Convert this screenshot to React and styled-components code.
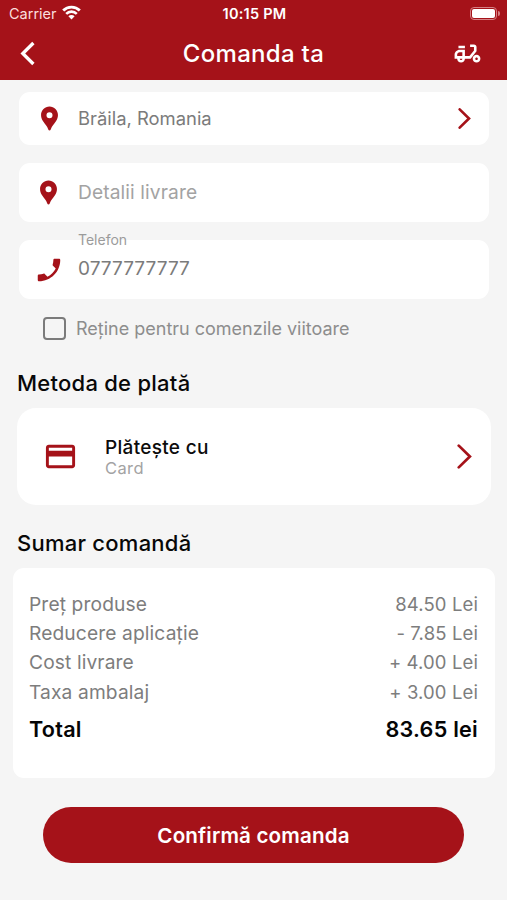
import React from 'react'
import styled, { createGlobalStyle } from 'styled-components';
import { MdLocationPin, MdPhone, MdPayment, MdOutlineDeliveryDining } from 'react-icons/md';

const summary = [
  { label: 'Preț produse', value: '84.50 Lei' },
  { label: 'Reducere aplicație', value: '- 7.85 Lei' },
  { label: 'Cost livrare', value: '+ 4.00 Lei' },
  { label: 'Taxa ambalaj', value: '+ 3.00 Lei' },
]

const Chevron = ({ width, height, stroke }) => (
  <svg width={width} height={height} viewBox="0 0 12 20" fill="none">
    <path d="M1.4 1.3 10.3 10 1.4 18.7" stroke="currentColor" strokeWidth={stroke} strokeLinecap="round" />
  </svg>
)

const WifiIcon = () => (
  <svg width="19" height="15" viewBox="0 0 19 15" fill="none" stroke="#fff">
    <path d="M1.2 5.5a11.8 11.8 0 0 1 16.6 0" strokeWidth="2.9" />
    <path d="M4.2 8.8a7.5 7.5 0 0 1 10.6 0" strokeWidth="2.6" />
    <path d="M9.5 14.4 6.4 11.3a4.4 4.4 0 0 1 6.2 0z" fill="#fff" stroke="none" />
  </svg>
)

const BackIcon = () => (
  <svg width="16" height="26" viewBox="0 0 16 26" fill="none">
    <path d="M13.4 2 2.8 12.5l10.6 10.5" stroke="#fff" strokeWidth="3.3" />
  </svg>
)

const App = () => {
  return (
    <>
      <GlobalStyle />
      <Screen>
        <Header>
          <StatusBar>
            <Carrier>
              <span>Carrier</span>
              <WifiIcon />
            </Carrier>
            <Clock>10:15 PM</Clock>
            <Battery>
              <BatteryBody />
              <BatteryTip />
            </Battery>
          </StatusBar>
          <NavBar>
            <NavButton aria-label="Înapoi">
              <BackIcon />
            </NavButton>
            <Title>Comanda ta</Title>
            <NavButton aria-label="Livrare" $end>
              <MdOutlineDeliveryDining size={31} color="#fff" />
            </NavButton>
          </NavBar>
        </Header>
        <Fields>
          <Field $height={53} $inset={16}>
            <FieldIcon><MdLocationPin size={29} /></FieldIcon>
            <FieldText $gap={14}>Brăila, Romania</FieldText>
            <Arrow $right={18}><Chevron width={13} height={21} stroke={2.5} /></Arrow>
          </Field>
          <Field $height={59} $inset={15} $top={18}>
            <FieldIcon><MdLocationPin size={29} /></FieldIcon>
            <FieldText $gap={15} $size={19.2} $spacing={0.1} $muted>Detalii livrare</FieldText>
          </Field>
          <Field $height={59} $inset={15} $top={18}>
            <FieldIcon $flip><MdPhone size={30} /></FieldIcon>
            <FloatingLabel>Telefon</FloatingLabel>
            <FieldText $gap={14} $size={19} $spacing={0.05}>0777777777</FieldText>
          </Field>
        </Fields>
        <Remember>
          <Checkbox />
          <span>Reține pentru comenzile viitoare</span>
        </Remember>
        <SectionTitle $top={25}>Metoda de plată</SectionTitle>
        <PaymentCard>
          <MdPayment size={35} color="#a51219" />
          <PaymentText>
            <PaymentTitle>Plătește cu</PaymentTitle>
            <PaymentMethod>Card</PaymentMethod>
          </PaymentText>
          <Arrow $right={19}><Chevron width={15} height={25} stroke={2.2} /></Arrow>
        </PaymentCard>
        <SectionTitle $top={23}>Sumar comandă</SectionTitle>
        <SummaryCard>
          {summary.map(({ label, value }) => (
            <SummaryRow key={label}>
              <span>{label}</span>
              <Amount>{value}</Amount>
            </SummaryRow>
          ))}
          <TotalRow>
            <span>Total</span>
            <span>83.65 lei</span>
          </TotalRow>
        </SummaryCard>
        <ConfirmButton>Confirmă comanda</ConfirmButton>
      </Screen>
    </>
  )
}

const GlobalStyle = createGlobalStyle`
  * {
    box-sizing: border-box;
  }

  body {
    margin: 0;
    background-color: #f5f5f5;
    font-family: Inter, "Liberation Sans", sans-serif;
  }

  button {
    font-family: inherit;
    border: none;
    padding: 0;
  }

  svg {
    display: block;
    flex-shrink: 0;
  }
`

const Screen = styled.div`
  display: flex;
  flex-direction: column;
  width: 507px;
  height: 900px;
  overflow: hidden;
  background-color: #f5f5f5;
`

const Header = styled.header`
  height: 80px;
  flex-shrink: 0;
  background-color: #a51219;
  color: white;
`

const StatusBar = styled.div`
  display: grid;
  grid-template-columns: 1fr auto 1fr;
  align-items: center;
  height: 27px;
  padding: 0 7px 0 9px;
`

const Carrier = styled.div`
  display: flex;
  align-items: center;
  gap: 5px;
  font-size: 14.5px;
  color: #fbdedd;

  svg {
    margin-top: -2px;
  }
`

const Clock = styled.span`
  font-size: 14.5px;
  font-weight: 600;
  letter-spacing: 0.25px;
`

const Battery = styled.div`
  display: flex;
  align-items: center;
  justify-content: flex-end;
  gap: 1px;
`

const BatteryBody = styled.div`
  width: 27px;
  height: 13px;
  padding: 1px;
  border: 1px solid #d58084;
  border-radius: 4px;

  &::before {
    content: '';
    display: block;
    height: 100%;
    border-radius: 2px;
    background-color: white;
  }
`

const BatteryTip = styled.div`
  width: 2px;
  height: 5px;
  border-radius: 0 2px 2px 0;
  background-color: #d58084;
`

const NavBar = styled.div`
  display: grid;
  grid-template-columns: 80px 1fr 80px;
  align-items: center;
  height: 53px;
`

const NavButton = styled.button`
  display: flex;
  justify-content: ${({ $end }) => ($end ? 'flex-end' : 'flex-start')};
  padding: ${({ $end }) => ($end ? '0 24px 0 0' : '0 0 0 20px')};
  background: none;
`

const Title = styled.h1`
  margin: 0;
  text-align: center;
  font-size: 24px;
  font-weight: 500;
  letter-spacing: 0.3px;
`

const Fields = styled.div`
  display: flex;
  flex-direction: column;
  padding: 12px 18px 0 19px;
`

const Field = styled.div`
  position: relative;
  display: flex;
  align-items: center;
  height: ${({ $height }) => $height}px;
  margin-top: ${({ $top }) => $top || 0}px;
  padding-left: ${({ $inset }) => $inset}px;
  border-radius: 11px;
  background-color: white;
`

const FieldIcon = styled.span`
  display: flex;
  color: #a51219;
  transform: ${({ $flip }) => ($flip ? 'scaleX(-1)' : 'none')};
`

const FieldText = styled.span`
  margin-left: ${({ $gap }) => $gap}px;
  padding-bottom: 2px;
  font-size: ${({ $size }) => $size || 18.4}px;
  letter-spacing: ${({ $spacing }) => $spacing || 0}px;
  color: ${({ $muted }) => ($muted ? '#a3a3a3' : '#7b7b7b')};
`

const FloatingLabel = styled.span`
  position: absolute;
  top: -9px;
  left: 59px;
  font-size: 14px;
  line-height: 17px;
  color: #9b9b9b;
`

const Arrow = styled.span`
  display: flex;
  margin-left: auto;
  margin-right: ${({ $right }) => $right}px;
  color: #a51219;
`

const Remember = styled.label`
  display: flex;
  align-items: center;
  gap: 10px;
  height: 30px;
  margin: 14px 0 0 43px;
  font-size: 18px;
  color: #8d8d8d;
`

const Checkbox = styled.span`
  width: 23px;
  height: 23px;
  border: 2px solid #7b7b7b;
  border-radius: 4px;
`

const SectionTitle = styled.h2`
  margin: ${({ $top }) => $top}px 0 0 17px;
  font-size: 22px;
  line-height: 30px;
  font-weight: 500;
  letter-spacing: 0.25px;
  color: #080808;
`

const PaymentCard = styled.div`
  display: flex;
  align-items: center;
  height: 97px;
  margin: 10px 16px 0 17px;
  padding-left: 26px;
  border-radius: 19px;
  background-color: white;
`

const PaymentText = styled.div`
  display: flex;
  flex-direction: column;
  margin-left: 27px;
`

const PaymentTitle = styled.span`
  padding-top: 1px;
  font-size: 19px;
  line-height: 21px;
  font-weight: 500;
  letter-spacing: 0.3px;
  color: #0c0c0c;
`

const PaymentMethod = styled.span`
  font-size: 16.5px;
  line-height: 20px;
  letter-spacing: 0.4px;
  color: #a3a3a3;
`

const SummaryCard = styled.div`
  height: 210px;
  margin: 10px 12px 0 13px;
  padding: 22px 17px 0 16px;
  border-radius: 11px;
  background-color: white;
`

const SummaryRow = styled.div`
  display: flex;
  justify-content: space-between;
  font-size: 19.2px;
  line-height: 29.2px;
  letter-spacing: 0.12px;
  color: #7d7d7d;
`

const Amount = styled.span`
  font-size: 18.5px;
`

const TotalRow = styled.div`
  display: flex;
  justify-content: space-between;
  margin-top: 6px;
  font-size: 21.6px;
  line-height: 32px;
  font-weight: 600;
  letter-spacing: 0.25px;
  color: #050505;
`

const ConfirmButton = styled.button`
  height: 56px;
  flex-shrink: 0;
  margin: 29px 43px 0;
  padding-top: 1px;
  border-radius: 28px;
  background-color: #a51219;
  color: white;
  font-size: 20.6px;
  font-weight: 600;
  letter-spacing: 0.15px;
`

export default App;
